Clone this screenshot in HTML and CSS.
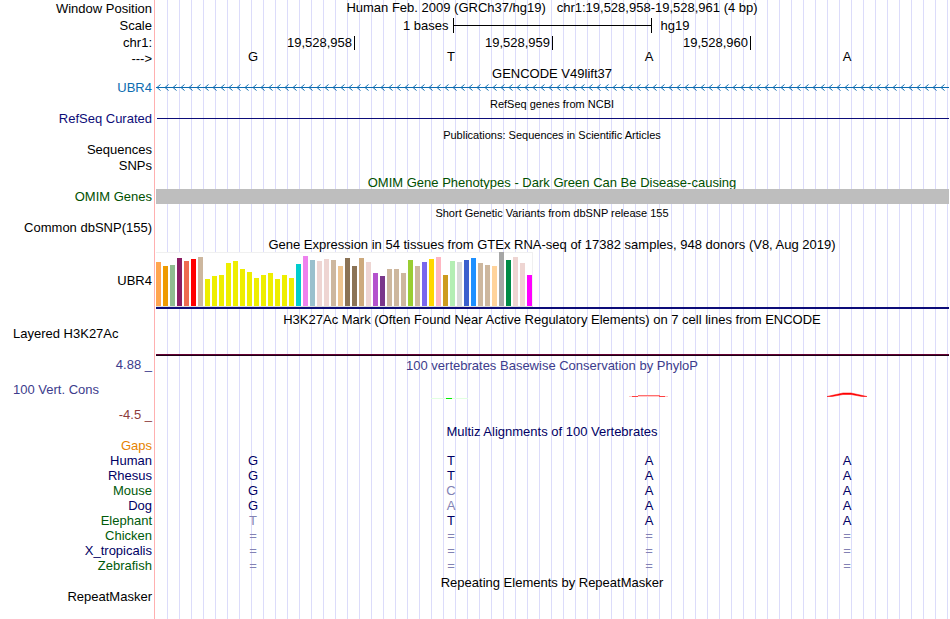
FILE: index.html
```
<!DOCTYPE html>
<html lang="en">
	<head>
		<meta charset="UTF-8">
		<title>chr1:19,528,958-19,528,961</title>
		<link rel="stylesheet" href="styles.css">
	</head>
	<body>
		<div class="browser">
			<div class="row row-head">
				<span class="label">Window Position</span>
				<h1 class="title">Human Feb. 2009 (GRCh37/hg19) &nbsp; chr1:19,528,958-19,528,961 (4 bp)</h1>
			</div>
			<div class="row row-head">
				<span class="label">Scale</span>
				<div class="scale">
					<span class="scale-size">1 bases</span>
					<span class="scale-bar"></span>
					<span class="scale-db">hg19</span>
				</div>
			</div>
			<div class="row row-head">
				<span class="label">chr1:</span>
				<div class="ruler">
					<span class="tick">19,528,958</span>
					<span class="tick">19,528,959</span>
					<span class="tick">19,528,960</span>
				</div>
			</div>
			<div class="row row-seq">
				<span class="label">---&gt;</span>
				<div class="bases">
					<span>G</span><span>T</span><span>A</span><span>A</span>
				</div>
			</div>

			<h2 class="title track-title">GENCODE V49lift37</h2>
			<div class="row">
				<span class="label gencode">UBR4</span>
				<div class="gene">
					<svg class="gene-line" height="7">
						<defs>
							<pattern id="arrows" width="8" height="7" patternUnits="userSpaceOnUse">
								<path class="gene-arrow" d="M4.5 0.5L1 3.5L4.5 6.5"/>
								<rect class="gene-body" y="3" width="8" height="1"/>
							</pattern>
						</defs>
						<rect width="100%" height="7" fill="url(#arrows)"/>
					</svg>
				</div>
			</div>

			<h2 class="title track-title small">RefSeq genes from NCBI</h2>
			<div class="row">
				<span class="label refseq">RefSeq Curated</span>
				<div class="exon-line"></div>
			</div>

			<h2 class="title track-title small">Publications: Sequences in Scientific Articles</h2>
			<div class="row"><span class="label">Sequences</span></div>
			<div class="row row-snps"><span class="label">SNPs</span></div>

			<h2 class="title track-title omim">OMIM Gene Phenotypes - Dark Green Can Be Disease-causing</h2>
			<div class="row">
				<span class="label omim">OMIM Genes</span>
				<div class="omim-bar"></div>
			</div>

			<h2 class="title track-title small">Short Genetic Variants from dbSNP release 155</h2>
			<div class="row"><span class="label">Common dbSNP(155)</span></div>

			<h2 class="title track-title">Gene Expression in 54 tissues from GTEx RNA-seq of 17382 samples, 948 donors (V8, Aug 2019)</h2>
			<div class="row row-gtex">
				<span class="label">UBR4</span>
				<div class="gtex">
					<div class="gtex-bars" id="gtex"></div>
				</div>
			</div>

			<h2 class="title track-title">H3K27Ac Mark (Often Found Near Active Regulatory Elements) on 7 cell lines from ENCODE</h2>
			<div class="row row-h3k">
				<span class="label left">Layered H3K27Ac</span>
				<div class="h3k-line"></div>
			</div>

			<div class="row row-phylo">
				<div class="phylo-labels">
					<span class="label phylo">4.88 _</span>
					<span class="label left phylo">100 Vert. Cons</span>
					<span class="label phylo-min">-4.5 _</span>
				</div>
				<div class="phylo-track">
					<h2 class="title track-title phylo">100 vertebrates Basewise Conservation by PhyloP</h2>
					<div class="bases phylo-marks">
						<span></span>
						<svg width="40" height="8">
							<path d="M0 6.5H37" stroke="#e1ffe1"/>
							<path d="M15 6.5H21" stroke="#00ee00"/>
						</svg>
						<svg width="40" height="8">
							<path d="M0 4.5H39" stroke="#ffc8c8"/>
							<path d="M3 4.5H9M30 4.5H36" stroke="#ff4040"/>
							<path d="M9 3.5H31" stroke="#ff7070"/>
						</svg>
						<svg width="40" height="8">
							<path d="M0 4.5H5L16 2.5H24L35 4.5H40L24 1H16Z" fill="#ff0000" stroke="#ff0000" stroke-width="0.5"/>
						</svg>
					</div>
				</div>
			</div>

			<h2 class="title track-title multiz">Multiz Alignments of 100 Vertebrates</h2>
			<div class="row"><span class="label gaps">Gaps</span></div>
			<table class="align">
				<tr><th scope="row">Human</th><td>G</td><td>T</td><td>A</td><td>A</td></tr>
				<tr><th scope="row">Rhesus</th><td>G</td><td>T</td><td>A</td><td>A</td></tr>
				<tr><th scope="row" class="alt">Mouse</th><td>G</td><td class="diff">C</td><td>A</td><td>A</td></tr>
				<tr><th scope="row">Dog</th><td>G</td><td class="diff">A</td><td>A</td><td>A</td></tr>
				<tr><th scope="row" class="alt">Elephant</th><td class="diff">T</td><td>T</td><td>A</td><td>A</td></tr>
				<tr class="unaligned"><th scope="row" class="alt">Chicken</th><td>=</td><td>=</td><td>=</td><td>=</td></tr>
				<tr class="unaligned"><th scope="row">X_tropicalis</th><td>=</td><td>=</td><td>=</td><td>=</td></tr>
				<tr class="unaligned"><th scope="row" class="alt">Zebrafish</th><td>=</td><td>=</td><td>=</td><td>=</td></tr>
			</table>

			<h2 class="title track-title">Repeating Elements by RepeatMasker</h2>
			<div class="row"><span class="label">RepeatMasker</span></div>
		</div>
		<script src="gtex.js"></script>
	</body>
</html>
```
FILE: styles.css
```
body, h1, h2{
	margin:0;
}
body{
	background:#fff;
	color:#000;
	font-family:"Liberation Sans", Arial, sans-serif;
	font-size:13px;
	line-height:15px;
}

/* pink divider, then a guide line every 12px */
.browser{
	min-height:100vh;
	background:
		linear-gradient(#ffb0b0, #ffb0b0) 154px 0 / 1px 100% no-repeat,
		linear-gradient(#fff, #fff) 0 0 / 156px 100% no-repeat,
		repeating-linear-gradient(to right, #dcdcfa 0, #dcdcfa 1px, transparent 1px, transparent 12px) 11px 0;
}

.row{
	display:grid;
	grid-template-columns:154px 1fr;
	align-items:center;
	height:15px;
}
.row-head{
	height:17px;
}
.row-seq{
	height:13px;
}
.row-snps{
	height:16px;
}

.label{
	padding-right:2px;
	text-align:right;
	white-space:nowrap;
}
.label.left{
	padding-left:13px;
	text-align:left;
}

.title{
	font-size:13px;
	font-weight:normal;
	text-align:center;
	white-space:nowrap;
}
.row-head .title{
	align-self:start;
}
.track-title{
	height:16px;
	margin-left:154px;
	line-height:19px;
}
.small{
	font-size:11px;
}

.gencode{
	color:#0c6cb0;
}
.refseq{
	color:#0c0c78;
}
.omim{
	color:#005000;
}
.phylo{
	color:#3c3c8c;
}
.phylo-min{
	color:#8c3c3c;
}
.multiz{
	color:#000064;
}
.gaps{
	color:#e68200;
}

.scale{
	display:grid;
	grid-template-columns:1fr 199px 1fr;
	align-items:center;
}
.scale-size{
	padding-right:4px;
	text-align:right;
}
.scale-bar{
	height:15px;
	border:solid #000;
	border-width:0 1px;
	background:linear-gradient(#000, #000) 0 7px / 100% 1px no-repeat;
}
.scale-db{
	padding-left:9px;
}

.ruler{
	display:grid;
	grid-template-columns:repeat(4, 1fr);
	margin:0 1px 0 3px;
}
.tick{
	padding-right:2px;
	border-right:1px solid #000;
	line-height:14px;
	text-align:right;
}

.bases{
	display:grid;
	grid-template-columns:repeat(4, 1fr);
	justify-items:center;
	padding-right:4px;
}
.row-seq .bases{
	align-self:start;
	line-height:12px;
}

.gene, .omim-bar, .gtex, .h3k-line{
	margin-left:2px;
	margin-right:1px;
}
.gene-line{
	display:block;
	width:100%;
}
.gene-arrow{
	fill:none;
	stroke:#0c6cb0;
}
.gene-body{
	fill:#0c6cb0;
}
.exon-line{
	height:1px;
	margin:0 1px 0 3px;
	background:#0c0c78;
}
.omim-bar{
	height:15px;
	background:#bebebe;
}

.row-gtex{
	height:59px;
}
.gtex{
	align-self:start;
	margin-top:1px;
	border-bottom:2px solid #0c0c78;
}
.gtex-bars{
	display:flex;
	align-items:flex-end;
	gap:2px;
	width:max-content;
	height:54px;
	padding-right:1px;
	border-bottom:1px solid #dcdcdc;
	background:#fff;
	box-shadow:inset 0 1px #f0f0f0, inset -1px 0 #f0f0f0;
}
.gtex-bar{
	width:5px;
}

.row-h3k{
	height:30px;
}
.row-h3k .label{
	align-self:start;
}
.h3k-line{
	align-self:end;
	height:1px;
	border-top:1px solid #640032;
	background:#1e0014;
}

.row-phylo{
	height:66px;
}
.phylo-labels{
	display:flex;
	flex-direction:column;
	justify-content:space-between;
	height:65px;
	align-self:end;
}
.phylo-track{
	align-self:start;
}
.phylo-track .track-title{
	margin-left:0;
}
.phylo-marks{
	padding-top:20px;
}

.align{
	width:calc(100% - 4px);
	border-collapse:collapse;
	table-layout:fixed;
	color:#000064;
	text-align:center;
}
.align th{
	width:152px;
	padding:0 2px 0 0;
	font-weight:normal;
	text-align:right;
}
.align td{
	padding:0;
}
.align .alt{
	color:#005a0a;
}
.align .diff, .unaligned td{
	color:#8282b4;
}
```
FILE: gtex.js
```
// tissue colour and bar height for UBR4
var tissues = [
	['#ffa54f',44],['#ee9a00',40],['#8fbc8f',41],['#8b1c62',48],['#ee6a50',45],['#ff0000',47],
	['#cdb79e',49],['#eeee00',27],['#eeee00',30],['#eeee00',31],['#eeee00',43],['#eeee00',45],
	['#eeee00',37],['#eeee00',34],['#eeee00',28],['#eeee00',31],['#eeee00',33],['#eeee00',27],
	['#eeee00',31],['#eeee00',28],['#00cdcd',42],['#ee82ee',50],['#9ac0cd',46],['#eed5d2',45],
	['#eed5d2',47],['#cdb79e',46],['#eec591',40],['#8b7355',48],['#8b7355',40],['#cdaa7d',48],
	['#eed5d2',44],['#b452cd',33],['#7a378b',30],['#cdb79e',37],['#cdb79e',37],['#cdb79e',33],
	['#9acd32',46],['#cdb79e',40],['#7a67ee',44],['#ffd700',47],['#ffb6c1',49],['#cd9b1d',31],
	['#b4eeb4',45],['#d9d9d9',44],['#3a5fcd',46],['#1e90ff',48],['#cdb79e',43],['#cdb79e',41],
	['#ffd39b',40],['#a6a6a6',54],['#008b45',46],['#eed5d2',49],['#eed5d2',43],['#ff00ff',31]
];
var gtex = document.getElementById('gtex');

for(var i = 0; i < tissues.length; i++){
	var bar = document.createElement('span');
	bar.className = 'gtex-bar';
	bar.style.background = tissues[i][0];
	bar.style.height = tissues[i][1] + 'px';
	gtex.appendChild(bar);
}
```
